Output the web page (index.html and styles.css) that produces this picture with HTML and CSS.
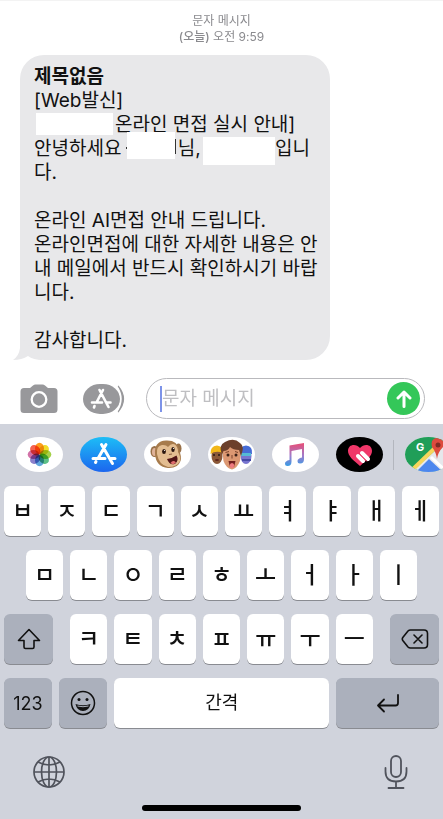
FILE: index.html
```html
<!DOCTYPE html>
<html lang="ko">
<head>
    <meta charset="UTF-8">
    <meta name="viewport" content="width=device-width, initial-scale=1.0">
    <title>문자 메시지</title>
    <link rel="stylesheet" href="styles.css">
</head>
<body>
    <main class="messages">
      <div class="date">
        <p>문자 메시지</p>
        <p><b>(오늘)</b> 오전 9:59</p>
      </div>

      <div class="bubble">
        <strong>제목없음</strong><br>
        [Web발신]<br>
        <span class="blank blank-company"></span>온라인 면접 실시 안내]<br>
        안녕하세요 <span class="blank blank-name"></span>님, <span class="blank blank-sender"></span>입니<br>
        다.<br>
        <br>
        온라인 AI면접 안내 드립니다.<br>
        온라인면접에 대한 자세한 내용은 안<br>
        내 메일에서 반드시 확인하시기 바랍<br>
        니다.<br>
        <br>
        감사합니다.
        <svg class="tail" viewBox="0 0 32 24"><path d="M7 0V12Q6 20 0 24Q9 24 15 20Q20 24 30 24L20 14Z" fill="#e8e8ea"/></svg>
      </div>
    </main>

    <form class="compose" onsubmit="return false">
      <button type="button" class="icon-button" aria-label="카메라">
        <svg width="38" height="30" viewBox="0 0 38 30">
          <path d="M4 4H10L13 1.500Q14 .5 15.500 .5H22.500Q24 .5 25 1.500L28 4H34Q37.500 4 37.500 7.500V25.500Q37.500 29 34 29H4Q.5 29 .5 25.500V7.500Q.5 4 4 4Z" fill="#98989b"/>
          <circle cx="19" cy="15.500" r="7.300" fill="none" stroke="#fff" stroke-width="2.300"/>
        </svg>
      </button>
      <button type="button" class="icon-button" aria-label="앱">
        <svg width="42" height="30" viewBox="0 0 42 30">
          <rect x="0" y="0" width="37" height="30" rx="17" ry="15" fill="#98989b"/>
          <path d="M35 2Q46 15 35 28Q42.500 15 35 2Z" fill="#98989b" stroke="#98989b" stroke-width="1.200"/>
          <path d="M33.500 2Q42.500 15 33.500 28" fill="none" stroke="#fff" stroke-width="1.400"/>
          <g fill="none" stroke="#fff" stroke-width="2.600" stroke-linecap="round">
            <path d="M16.500 6L25.500 23M20 6L14 17.500M11.500 22L11 23.500M9 18.500H19M24 18.500H27.500"/>
          </g>
        </svg>
      </button>
      <div class="field">
        <span class="caret"></span>
        <input type="text" id="message" name="message" placeholder="문자 메시지" aria-label="문자 메시지">
        <button type="submit" class="send" aria-label="보내기">
          <svg width="16" height="18" viewBox="0 0 16 18"><path d="M8 16.500V2M2 8L8 2L14 8" fill="none" stroke="#fff" stroke-width="3" stroke-linecap="round" stroke-linejoin="round"/></svg>
        </button>
      </div>
    </form>

    <section class="keyboard">
      <nav class="apps">
        <button type="button" class="app" aria-label="사진">
          <svg viewBox="0 0 47 35">
            <g class="petals">
              <ellipse cx="23.500" cy="11.500" rx="4.500" ry="5.800" fill="#fb9d1c"/>
              <ellipse cx="23.500" cy="11.500" rx="4.500" ry="5.800" fill="#f0dc2c" transform="rotate(45 23.500 17.500)"/>
              <ellipse cx="23.500" cy="11.500" rx="4.500" ry="5.800" fill="#a4d148" transform="rotate(90 23.500 17.500)"/>
              <ellipse cx="23.500" cy="11.500" rx="4.500" ry="5.800" fill="#5cbf86" transform="rotate(135 23.500 17.500)"/>
              <ellipse cx="23.500" cy="11.500" rx="4.500" ry="5.800" fill="#62a8dc" transform="rotate(180 23.500 17.500)"/>
              <ellipse cx="23.500" cy="11.500" rx="4.500" ry="5.800" fill="#8b80cb" transform="rotate(225 23.500 17.500)"/>
              <ellipse cx="23.500" cy="11.500" rx="4.500" ry="5.800" fill="#d272a8" transform="rotate(270 23.500 17.500)"/>
              <ellipse cx="23.500" cy="11.500" rx="4.500" ry="5.800" fill="#f56350" transform="rotate(315 23.500 17.500)"/>
            </g>
          </svg>
        </button>
        <button type="button" class="app app-store" aria-label="App Store">
          <svg viewBox="0 0 47 35">
            <path d="M21.500 7.500L32.500 26.500M26 7.500L18 21.500M15.500 25.500L16 24.500M13 21.500H25M31 21.500H35" fill="none" stroke="#fff" stroke-width="3" stroke-linecap="round"/>
          </svg>
        </button>
        <button type="button" class="app" aria-label="애니모지">
          <svg viewBox="0 0 47 35">
            <ellipse cx="10.500" cy="14.500" rx="4" ry="5.500" fill="#987048"/>
            <ellipse cx="10.500" cy="15" rx="2.500" ry="4" fill="#e0b39a"/>
            <ellipse cx="34.500" cy="11.500" rx="3" ry="5" fill="#987048"/>
            <path d="M11 17Q10 4 22 3.500Q34 3 35 13Q38 20 36.500 24Q34 31.500 24 31Q12 30 11 17Z" fill="#a77b4c"/>
            <path d="M13 17Q12 9 18 8Q22 7.500 24 10Q27 6 31 7.500Q34 10 34 15Q37 20 36 24Q33 30 24 30Q15 28 13 17Z" fill="#e3bd91"/>
            <ellipse cx="20" cy="14.500" rx="1.900" ry="2.600" fill="#2b1710"/>
            <ellipse cx="29" cy="12.500" rx="1.700" ry="2.600" fill="#2b1710"/>
            <circle cx="20.500" cy="13.500" r=".6" fill="#fff"/><circle cx="29.500" cy="11.500" r=".6" fill="#fff"/>
            <path d="M25 17.500L28 17" stroke="#8e6242" stroke-width="1.200"/>
            <path d="M23 22Q29 21 32.500 18.500Q35 23 31.500 26.500Q26 29.500 23 22Z" fill="#511517"/>
            <path d="M26.500 26Q29 22.500 32 25.500Q29 28.500 26.500 26Z" fill="#e16d6d"/>
          </svg>
        </button>
        <button type="button" class="app" aria-label="미모티콘">
          <svg viewBox="0 0 47 35">
            <ellipse cx="9" cy="19" rx="5.500" ry="8" fill="#8a5838"/>
            <path d="M2.500 17Q2 9 9 8.500Q15 9 15 16Q8 13 2.500 17Z" fill="#f2b719"/>
            <path d="M5 18H7M10 18H12" stroke="#271714" stroke-width="1.300"/><ellipse cx="9" cy="23" rx="2" ry="1" fill="#5d231d"/>
            <ellipse cx="38" cy="19" rx="5.500" ry="8" fill="#7774cf"/>
            <path d="M32 17Q31 9 38 8.500Q45 9 44 17Z" fill="#466cd5"/>
            <path d="M33 16H43V19H33Z" fill="#55bad4"/><path d="M34 23H43" stroke="#454aa6" stroke-width="2"/>
            <path d="M14.500 15Q14 7 24 7Q33 7 33 16L32 24Q29 31.500 24 32.500Q18 31 15.500 24Z" fill="#dc9872"/>
            <path d="M14 18Q10 8 17 5Q26 0 32 6Q37 9 33 19L31 13Q25 13 22 10Q20 14 15.500 14Z" fill="#6c402b"/>
            <circle cx="20" cy="18" r="1.500" fill="#3a2118"/><circle cx="28" cy="18" r="1.500" fill="#3a2118"/>
            <path d="M17.500 15.500L21 14.500M27 14.500L30 15.500M24 18V21.500" stroke="#7a432c" stroke-width="1"/>
            <path d="M20.500 24H27.500L26 30H22Z" fill="#72201f"/><ellipse cx="24" cy="28.500" rx="2.200" ry="2.500" fill="#f07b81"/>
          </svg>
        </button>
        <button type="button" class="app" aria-label="음악">
          <svg viewBox="0 0 47 35">
            <defs>
              <linearGradient id="note" x1="0" y1="0" x2="0" y2="1">
                <stop offset="0" stop-color="#e94d74"/>
                <stop offset=".55" stop-color="#a17bcb"/>
                <stop offset="1" stop-color="#379ce5"/>
              </linearGradient>
            </defs>
            <path d="M17.500 8.500L32 6V22Q32 26.500 28 26.500Q25.500 26.500 25.500 24Q25.500 21.500 30 20.500V12L19.500 14V24.500Q19.500 29 15.500 29Q13 29 13 26.500Q13 24 17.500 23Z" fill="url(#note)"/>
          </svg>
        </button>
        <button type="button" class="app app-touch" aria-label="디지털 터치">
          <svg viewBox="0 0 47 35">
            <path d="M24 29C17 23 12 19 12 14C12 7 20 6 24 11C28 6 36 7 36 14C36 19 31 23 24 29Z" fill="#f03769"/>
            <path d="M22 19L27 24M26 16L32 22" stroke="#fff" stroke-width="4" stroke-linecap="round"/>
            <path d="M23 16.500L31 24.500" stroke="#f03769" stroke-width="1"/>
          </svg>
        </button>
        <span class="divider"></span>
        <button type="button" class="app app-maps" aria-label="Google 지도">
          <svg viewBox="0 0 47 35">
            <rect width="47" height="35" fill="#209e58"/>
            <path d="M47 0V35H6L32 12Z" fill="#e6e8ec"/>
            <path d="M5 35L31 10" stroke="#f6d65c" stroke-width="4"/>
            <path d="M11 35L24 22L38 35Z" fill="#4c87ee"/>
            <path d="M26 20L43 36" stroke="#fff" stroke-width="3"/>
            <path d="M32 22Q31 15 27 10Q25 1 33 1Q40 2 38 10Q33 15 32 22Z" fill="#dd4b3e"/>
            <circle cx="33" cy="8" r="2.500" fill="#812c25"/>
            <text x="11" y="14" class="maps-letter">G</text>
          </svg>
        </button>
      </nav>

      <div class="keys">
        <div class="row">
          <button type="button" class="key">ㅂ</button>
          <button type="button" class="key">ㅈ</button>
          <button type="button" class="key">ㄷ</button>
          <button type="button" class="key">ㄱ</button>
          <button type="button" class="key">ㅅ</button>
          <button type="button" class="key">ㅛ</button>
          <button type="button" class="key">ㅕ</button>
          <button type="button" class="key">ㅑ</button>
          <button type="button" class="key">ㅐ</button>
          <button type="button" class="key">ㅔ</button>
        </div>
        <div class="row row-middle">
          <button type="button" class="key">ㅁ</button>
          <button type="button" class="key">ㄴ</button>
          <button type="button" class="key">ㅇ</button>
          <button type="button" class="key">ㄹ</button>
          <button type="button" class="key">ㅎ</button>
          <button type="button" class="key">ㅗ</button>
          <button type="button" class="key">ㅓ</button>
          <button type="button" class="key">ㅏ</button>
          <button type="button" class="key">ㅣ</button>
        </div>
        <div class="row row-shift">
          <button type="button" class="key key-dark key-side" aria-label="Shift">
            <svg width="24" height="22" viewBox="0 0 24 22"><path d="M12 1.500L22.500 12.500H17V19Q17 20.500 15.500 20.500H8.500Q7 20.500 7 19V12.500H1.500Z" fill="none" stroke="#111" stroke-width="1.600" stroke-linejoin="round"/></svg>
          </button>
          <div class="row row-letters">
            <button type="button" class="key">ㅋ</button>
            <button type="button" class="key">ㅌ</button>
            <button type="button" class="key">ㅊ</button>
            <button type="button" class="key">ㅍ</button>
            <button type="button" class="key">ㅠ</button>
            <button type="button" class="key">ㅜ</button>
            <button type="button" class="key">ㅡ</button>
          </div>
          <button type="button" class="key key-dark key-side" aria-label="지우기">
            <svg width="28" height="20" viewBox="0 0 28 20"><path d="M9.500 1H23Q26.500 1 26.500 4.500V15.500Q26.500 19 23 19H9.500Q8 19 7 18L1.800 11.500Q.8 10 1.800 8.500L7 2Q8 1 9.500 1ZM13 6L21 14M21 6L13 14" fill="none" stroke="#111" stroke-width="1.600" stroke-linecap="round" stroke-linejoin="round"/></svg>
          </button>
        </div>
        <div class="row">
          <button type="button" class="key key-dark key-number">123</button>
          <button type="button" class="key key-dark key-number" aria-label="이모티콘">
            <svg width="26" height="26" viewBox="0 0 26 26">
              <circle cx="13" cy="13" r="11.500" fill="none" stroke="#111" stroke-width="1.500"/>
              <circle cx="9" cy="9.500" r="1.500" fill="#111"/><circle cx="17" cy="9.500" r="1.500" fill="#111"/>
              <path d="M5.500 14Q13 16.500 20.500 14Q19 21 13 21Q7 21 5.500 14Z" fill="#111"/>
              <path d="M7.500 16Q13 17.500 18.500 16" fill="none" stroke="#abb0bc" stroke-width="1"/>
            </svg>
          </button>
          <button type="button" class="key key-space">간격</button>
          <button type="button" class="key key-dark key-return" aria-label="줄바꿈">
            <svg width="24" height="20" viewBox="0 0 24 20"><path d="M22 2V10Q22 12.500 19.500 12.500H2M8 6.500L2 12.500L8 18.500" fill="none" stroke="#111" stroke-width="1.800" stroke-linecap="round" stroke-linejoin="round"/></svg>
          </button>
        </div>
      </div>

      <div class="bottom">
        <button type="button" class="icon-button" aria-label="언어">
          <svg width="32" height="32" viewBox="0 0 32 32" fill="none" stroke="#50535c" stroke-width="1.700">
            <circle cx="16" cy="16" r="15"/>
            <ellipse cx="16" cy="16" rx="7.500" ry="15"/>
            <path d="M16 1V31M1 16H31M5 6Q16 12 27 6M5 26Q16 20 27 26"/>
          </svg>
        </button>
        <button type="button" class="icon-button" aria-label="받아쓰기">
          <svg width="24" height="34" viewBox="0 0 24 34" fill="none" stroke="#50535c" stroke-width="1.800" stroke-linecap="round">
            <rect x="7" y="1" width="10" height="21" rx="5"/>
            <path d="M1.500 13V16.500Q1.500 26.500 12 26.500Q22.500 26.500 22.500 16.500V13M12 26.500V33M4.500 33H19.500"/>
          </svg>
        </button>
      </div>
      <div class="home-bar"></div>
    </section>
  </body>
</html>
```

FILE: styles.css
```css
* {
  margin: 0;
  padding: 0;
  box-sizing: border-box;
}
body {
  display: flex;
  flex-direction: column;
  min-height: 100vh;
  font-family: Inter, "Noto Sans CJK KR", sans-serif;
  background-color: #fff;
  color: #111;
  overflow-x: hidden;
}
button {
  border: none;
  background: none;
  font-family: inherit;
  color: inherit;
  cursor: pointer;
}
svg {
  display: block;
}
.messages {
  padding: 12px 20px 18px;
  border-top: 1px solid #f3f3f3;
}
.date {
  margin-bottom: 10px;
  font-size: 12px;
  line-height: 16px;
  text-align: center;
  color: #8a8a8e;
}
.date b {
  font-weight: 500;
}
.bubble {
  position: relative;
  width: 77%;
  padding: 10px 8px 7px 14px;
  border-radius: 24px;
  background-color: #e8e8ea;
  font-size: 19px;
  line-height: 24px;
}
.bubble strong {
  font-weight: bold;
}
.blank {
  display: inline-block;
  position: relative;
  vertical-align: top;
  background-color: #fff;
}
.blank-company {
  width: 77px;
  height: 22px;
  margin: 0 2px 2px;
}
.blank-name {
  width: 48px;
  height: 27px;
  margin: -5px 3px 2px 0;
}
/* edges of the name that stick out from under the blank */
.blank-name:before,
.blank-name:after {
  content: "";
  position: absolute;
  background-color: #333;
}
.blank-name:before {
  top: 15px;
  left: -1px;
  width: 1px;
  height: 2px;
}
.blank-name:after {
  top: 7px;
  right: -1px;
  width: 1px;
  height: 15px;
}
.blank-sender {
  width: 72px;
  height: 28px;
  margin: 0 0 -4px -3px;
}
.tail {
  position: absolute;
  left: -7px;
  bottom: 0;
  width: 32px;
  height: 24px;
}
.compose {
  display: flex;
  align-items: center;
  gap: 25px;
  padding: 0 18px 5px 20px;
}
.field {
  display: flex;
  flex: 1;
  align-items: center;
  min-width: 0;
  height: 41px;
  margin-left: -4px;
  padding: 0 4px 0 13px;
  border: 1px solid #b9b9bd;
  border-radius: 21px;
}
.caret {
  width: 2px;
  height: 26px;
  background-color: #7d93e8;
}
.field input {
  flex: 1;
  min-width: 0;
  border: none;
  outline: none;
  background: none;
  font-family: inherit;
  font-size: 19px;
  line-height: 24px;
}
.field input::placeholder {
  color: #bfbfc2;
}
.send {
  display: flex;
  align-items: center;
  justify-content: center;
  width: 33px;
  height: 33px;
  border-radius: 50%;
  background-color: #34c759;
}
.keyboard {
  flex: 1;
  background-color: #d0d3dc;
}
.apps {
  display: flex;
  align-items: center;
  gap: 17px;
  padding: 13px 0 14px 16px;
  overflow: hidden;
}
.app {
  flex: none;
  width: 47px;
  height: 35px;
  border-radius: 24px / 18px;
  background-color: #fff;
  overflow: hidden;
}
.app-store {
  background: linear-gradient(#1dbdf6, #1c66ee);
}
.app-touch {
  background-color: #000;
}
.petals ellipse {
  mix-blend-mode: multiply;
}
.maps-letter {
  font-size: 11px;
  font-weight: bold;
  fill: #fff;
}
.divider {
  flex: none;
  width: 1px;
  height: 30px;
  margin: 0 -6px 0 -7px;
  background-color: #b3b6be;
}
.keys {
  display: flex;
  flex-direction: column;
  gap: 14px;
  padding: 0 4px;
}
.row {
  display: flex;
  gap: 7px;
}
.row-middle {
  padding: 0 22px;
}
.row-shift {
  gap: 17px;
}
.row-letters {
  flex: 1;
}
.key {
  display: flex;
  flex: 1;
  align-items: center;
  justify-content: center;
  min-width: 0;
  height: 50px;
  padding-bottom: 5px;
  border-radius: 6px;
  background-color: #fff;
  box-shadow: 0 1px 0 #898b91;
  font-size: 23px;
  font-weight: 500;
}
.key-dark {
  padding-bottom: 0;
  background-color: #abb0bc;
}
.key-side {
  flex: none;
  width: 49px;
}
.key-number {
  flex: none;
  width: 48px;
  font-size: 18px;
  font-weight: normal;
}
.key-space {
  flex: 2.1;
  font-size: 18px;
  font-weight: normal;
}
.bottom {
  display: flex;
  align-items: center;
  justify-content: space-between;
  padding: 27px 35px 16px 33px;
}
.home-bar {
  width: 36%;
  height: 6px;
  margin: 0 auto 8px;
  border-radius: 3px;
  background-color: #000;
}
```
